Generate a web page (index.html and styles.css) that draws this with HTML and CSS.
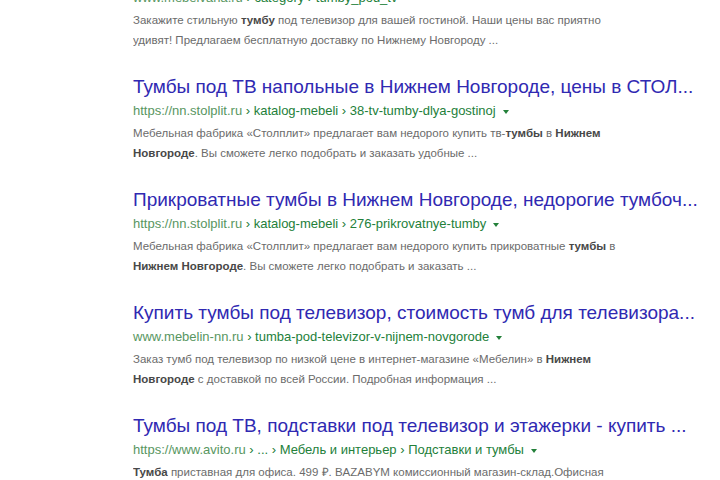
FILE: index.html
```html
<!DOCTYPE html>
<html lang="ru">
<head>
    <meta charset="UTF-8">
    <meta name="viewport" content="width=device-width, initial-scale=1.0">
    <title>тумбы под телевизор нижний новгород</title>
    <link rel="stylesheet" href="styles.css">
</head>
<body>
    <div class="results">
        <!-- первый результат, заголовок ушёл за верх экрана -->
        <div class="result result-cut">
            <div class="url"><span class="domain">www.mebelvana.ru</span> › category › tumby_pod_tv</div>
            <div class="snippet">Закажите стильную <b>тумбу</b> под телевизор для вашей гостиной. Наши цены вас приятно удивят! Предлагаем бесплатную доставку по Нижнему Новгороду ...</div>
        </div>

        <div class="result">
            <a class="title" href="#">Тумбы под ТВ напольные в Нижнем Новгороде, цены в СТОЛ...</a>
            <div class="url"><span class="domain">https://nn.stolplit.ru</span> › katalog-mebeli › 38-tv-tumby-dlya-gostinoj<span class="arrow"></span></div>
            <div class="snippet">Мебельная фабрика «Столплит» предлагает вам недорого купить тв-<b>тумбы</b> в <b>Нижнем Новгороде</b>. Вы сможете легко подобрать и заказать удобные ...</div>
        </div>

        <div class="result">
            <a class="title" href="#">Прикроватные тумбы в Нижнем Новгороде, недорогие тумбоч...</a>
            <div class="url"><span class="domain">https://nn.stolplit.ru</span> › katalog-mebeli › 276-prikrovatnye-tumby<span class="arrow"></span></div>
            <div class="snippet">Мебельная фабрика «Столплит» предлагает вам недорого купить прикроватные <b>тумбы</b> в <b>Нижнем Новгороде</b>. Вы сможете легко подобрать и заказать ...</div>
        </div>

        <div class="result">
            <a class="title" href="#">Купить тумбы под телевизор, стоимость тумб для телевизора...</a>
            <div class="url"><span class="domain">www.mebelin-nn.ru</span> › tumba-pod-televizor-v-nijnem-novgorode<span class="arrow"></span></div>
            <div class="snippet">Заказ тумб под телевизор по низкой цене в интернет-магазине «Мебелин» в <b>Нижнем Новгороде</b> с доставкой по всей России. Подробная информация ...</div>
        </div>

        <div class="result">
            <a class="title" href="#">Тумбы под ТВ, подставки под телевизор и этажерки - купить ...</a>
            <div class="url"><span class="domain">https://www.avito.ru</span> › ... › Мебель и интерьер › Подставки и тумбы<span class="arrow"></span></div>
            <div class="snippet"><b>Тумба</b> приставная для офиса. 499 ₽. BAZABYM комиссионный магазин-склад.Офисная тумба, 3 ящика, в хорошем состоянии ...</div>
        </div>
    </div>
</body>
</html>
```

FILE: styles.css
```css
body {
    margin: 0;
    background-color: #fff;
    font-family: "Liberation Sans", Arial, sans-serif;
    overflow: hidden;
}

.results {
    padding-left: 133px;
    width: 580px;
    margin-top: -14px;
}

.result {
    margin-bottom: 25px;
}

.title {
    display: block;
    height: 24px;
    font-size: 19px;
    line-height: 24px;
    color: #3029b2;
    text-decoration: none;
    white-space: nowrap;
}

.url {
    height: 24px;
    font-size: 13px;
    line-height: 24px;
    color: #23803a;
    white-space: nowrap;
}

.url .domain {
    color: #58965f;
}

/* маленький треугольник после адреса */
.url .arrow {
    display: inline-block;
    margin-left: 7px;
    vertical-align: middle;
    border-top: 4px solid #23803a;
    border-left: 3px solid transparent;
    border-right: 3px solid transparent;
}

.snippet {
    width: 495px;
    height: 40px;
    font-size: 11.5px;
    line-height: 20px;
    color: #6b6b6b;
    overflow: hidden;
}

.snippet b {
    color: #484848;
}
```
